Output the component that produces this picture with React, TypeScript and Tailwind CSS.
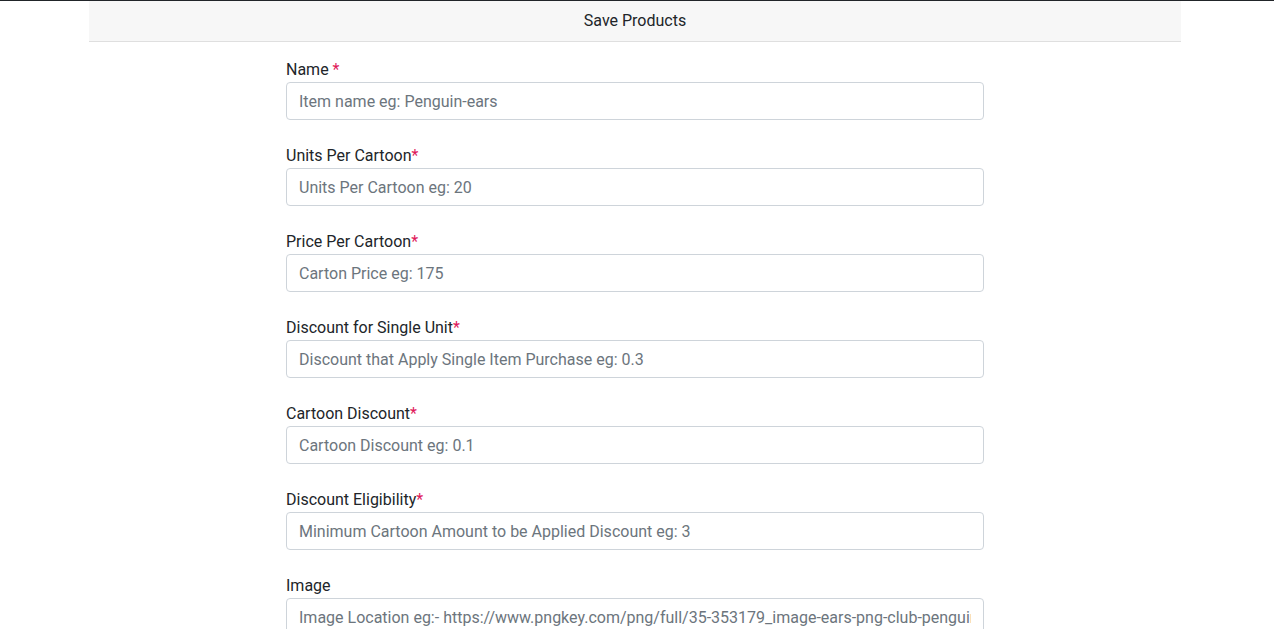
import { useState } from "react";

type Field = {
  id: string;
  label: string;
  required: boolean;
  spaced?: boolean;
  placeholder: string;
};

const FIELDS: Field[] = [
  { id: "name", label: "Name", required: true, spaced: true, placeholder: "Item name eg: Penguin-ears" },
  { id: "units", label: "Units Per Cartoon", required: true, placeholder: "Units Per Cartoon eg: 20" },
  { id: "price", label: "Price Per Cartoon", required: true, placeholder: "Carton Price eg: 175" },
  { id: "single", label: "Discount for Single Unit", required: true, placeholder: "Discount that Apply Single Item Purchase eg: 0.3" },
  { id: "carton", label: "Cartoon Discount", required: true, placeholder: "Cartoon Discount eg: 0.1" },
  { id: "eligibility", label: "Discount Eligibility", required: true, placeholder: "Minimum Cartoon Amount to be Applied Discount eg: 3" },
  {
    id: "image",
    label: "Image",
    required: false,
    placeholder: "Image Location eg:- https://www.pngkey.com/png/full/35-353179_image-ears-png-club-penguin-ears.png",
  },
];

export default function App() {
  const [values, setValues] = useState<Record<string, string>>({});

  return (
    <div
      className="min-h-screen border-t border-[#212529] bg-white text-[#212529]"
      style={{ fontFamily: 'Roboto, "Noto Sans", sans-serif' }}
    >
      <div className="ml-[89px] w-[1092px]">
        {/* Header */}
        <div className="flex h-[41px] items-center justify-center border-b border-[#dfdfdf] bg-[#f7f7f7] text-base">
          Save Products
        </div>

        {/* Form */}
        <form className="mx-auto w-[698px] pt-4" onSubmit={(e) => e.preventDefault()}>
          {FIELDS.map((f) => (
            <div key={f.id} className="mb-6">
              <label htmlFor={f.id} className="block text-base leading-6">
                {f.label}
                {f.required && <span className="text-[#e0195a]">{f.spaced ? " *" : "*"}</span>}
              </label>
              <input
                id={f.id}
                type="text"
                value={values[f.id] ?? ""}
                onChange={(e) => setValues((v) => ({ ...v, [f.id]: e.target.value }))}
                placeholder={f.placeholder}
                className="block h-[38px] w-full rounded border border-[#ced4da] px-3 py-1.5 text-base leading-6 text-[#495057] outline-none placeholder:text-[#6c757d]"
              />
            </div>
          ))}
        </form>
      </div>
    </div>
  );
}
